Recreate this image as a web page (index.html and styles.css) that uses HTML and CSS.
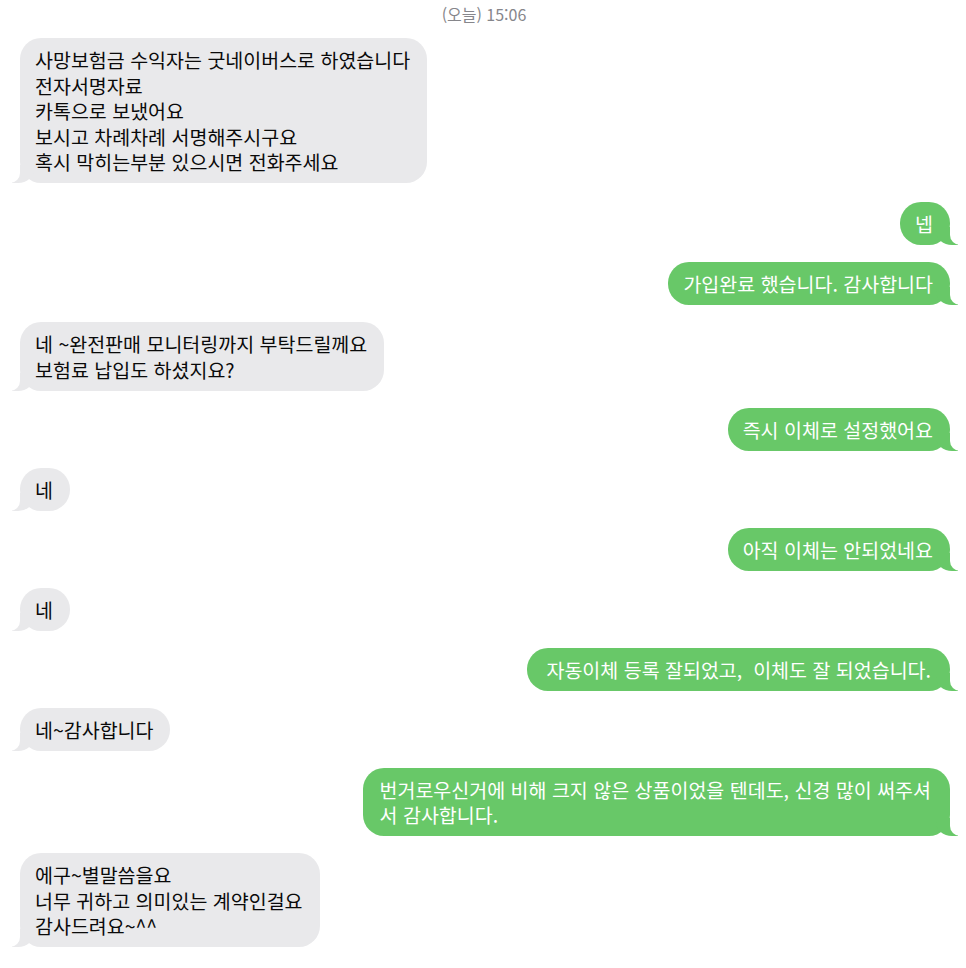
FILE: index.html
```html
<!DOCTYPE html>
<html lang="ko">
<head>
<meta charset="utf-8">
<title>메시지</title>
<link rel="stylesheet" href="styles.css">
</head>
<body>
<div class="thread">
  <div class="stamp">(오늘) 15:06</div>
  <div class="bubble in first">사망보험금 수익자는 굿네이버스로 하였습니다<br>전자서명자료<br>카톡으로 보냈어요<br>보시고 차례차례 서명해주시구요<br>혹시 막히는부분 있으시면 전화주세요</div>
  <div class="bubble out">넵</div>
  <div class="bubble out">가입완료 했습니다. 감사합니다</div>
  <div class="bubble in">네 ~완전판매 모니터링까지 부탁드릴께요<br>보험료 납입도 하셨지요?</div>
  <div class="bubble out">즉시 이체로 설정했어요</div>
  <div class="bubble in">네</div>
  <div class="bubble out">아직 이체는 안되었네요</div>
  <div class="bubble in">네</div>
  <div class="bubble out wide">자동이체 등록 잘되었고,&nbsp; 이체도 잘 되었습니다.</div>
  <div class="bubble in">네~감사합니다</div>
  <div class="bubble out wide long">번거로우신거에 비해 크지 않은 상품이었을 텐데도, 신경 많이 써주셔<br>서 감사합니다.</div>
  <div class="bubble in">에구~별말씀을요<br>너무 귀하고 의미있는 계약인걸요<br>감사드려요~^^</div>
</div>
</body>
</html>
```

FILE: styles.css
```css
html, body {
  margin: 0;
  padding: 0;
  background: #ffffff;
}

body {
  font-family: "Noto Sans CJK KR", "Noto Sans", sans-serif;
  color: #111111;
}

.thread {
  display: flex;
  flex-direction: column;
  gap: 17px;
  padding: 5px 16px 20px 20px;
}

.stamp {
  align-self: center;
  font-size: 16px;
  line-height: 18px;
  color: #86868b;
  margin-bottom: -2px;
  padding-right: 2px;
}

.bubble {
  position: relative;
  z-index: 0;
  font-size: 19.5px;
  font-weight: 400;
  line-height: 25.5px;
  padding: 9px 17px 8.5px 15px;
  border-radius: 21px;
  white-space: nowrap;
}

.bubble.first {
  margin-bottom: 2px;
}

.bubble.wide {
  padding-left: 19px;
  padding-right: 19px;
}

.bubble.long {
  padding-left: 17px;
}

.bubble.in {
  align-self: flex-start;
  background: #e9e9eb;
  color: #0a0a0a;
}

.bubble.out {
  align-self: flex-end;
  background: #68c868;
  color: #ffffff;
}

.bubble::before,
.bubble::after {
  content: "";
  position: absolute;
  bottom: 0;
  z-index: -1;
}

.bubble.in::before {
  left: -8px;
  width: 22px;
  height: 18px;
  background: #e9e9eb;
  border-bottom-right-radius: 16px 14px;
}

.bubble.in::after {
  left: -10px;
  width: 10px;
  height: 18px;
  background: #ffffff;
  border-bottom-right-radius: 10px;
}

.bubble.out::before {
  right: -8px;
  width: 22px;
  height: 18px;
  background: #68c868;
  border-bottom-left-radius: 16px 14px;
}

.bubble.out::after {
  right: -10px;
  width: 10px;
  height: 18px;
  background: #ffffff;
  border-bottom-left-radius: 10px;
}
```
